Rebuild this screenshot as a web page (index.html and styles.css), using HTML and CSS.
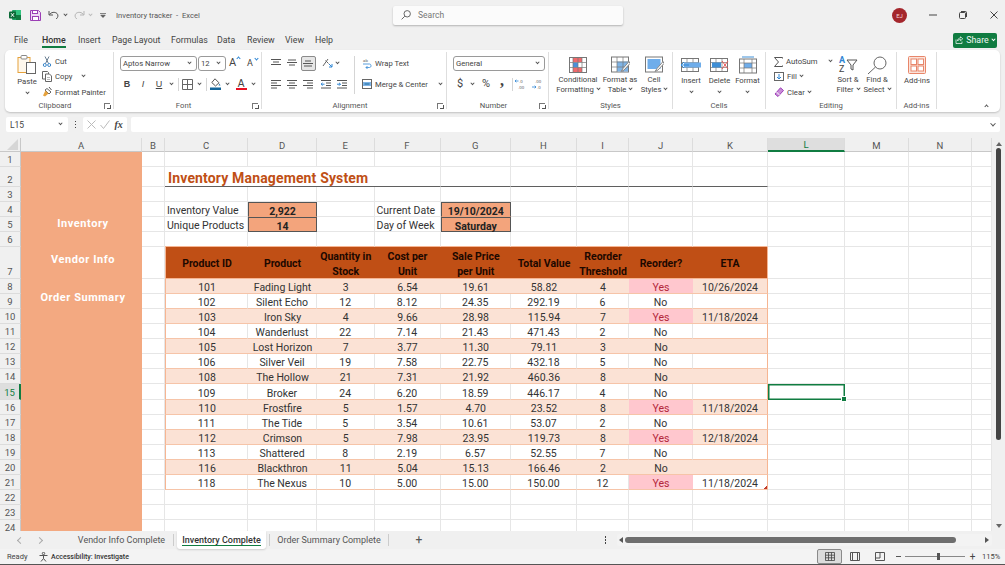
FILE: index.html
```html
<!DOCTYPE html>
<html lang="en">
<head>
<meta charset="utf-8">
<title>Inventory tracker - Excel</title>
<link rel="stylesheet" href="styles.css">
</head>
<body>
<div class="app">

<header class="titlebar">
  <div class="qat">
    <svg class="logo" width="12" height="12" viewBox="0 0 12 12"><rect x="3" y="1" width="9" height="10" rx="1" fill="#21a366"/><rect x="7" y="1" width="5" height="5" fill="#33c481"/><rect x="7" y="6" width="5" height="5" fill="#107c41"/><rect x="0" y="2.500" width="7" height="7" rx="1" fill="#0b6a37"/><path d="M2 4.200 5 7.800M5 4.200 2 7.800" stroke="#fff" stroke-width="1"/></svg>
    <svg class="save" width="11" height="11" viewBox="0 0 11 11"><path d="M.5.5h8l2 2v8H.5z" fill="#eed9f3" stroke="#9b3fb5"/><rect x="2.500" y=".5" width="5" height="3" fill="#fff" stroke="#9b3fb5"/><rect x="2.500" y="6.500" width="6" height="4" fill="#fff" stroke="#9b3fb5"/></svg>
    <svg class="undo" width="11" height="10" viewBox="0 0 11 10"><path d="M1 1v4h4M1.400 4.800C3 2 7 1.600 9 3.500c1.500 1.600 1.200 3.800-.8 5.500" fill="none" stroke="#555"/></svg>
    <i class="chev undo-c"></i>
    <svg class="redo" width="11" height="10" viewBox="0 0 11 10"><path d="M10 1v4H6M9.600 4.800C8 2 4 1.600 2 3.500.5 5.100.8 7.300 2.800 9" fill="none" stroke="#b5b5b5"/></svg>
    <i class="chev redo-c"></i>
    <svg class="custom" width="6" height="5" viewBox="0 0 6 5"><path d="M0 .5h6M.8 2.200l2.200 2.300 2.200-2.300z" fill="#555" stroke="#555" stroke-width=".7"/></svg>
    <span class="doc-title">Inventory tracker&nbsp; -&nbsp; Excel</span>
  </div>
  <div class="search">
    <svg width="10" height="10" viewBox="0 0 10 10"><circle cx="6.200" cy="3.800" r="3.200" fill="none" stroke="#666"/><path d="M3.800 6.200.6 9.400" stroke="#666"/></svg>
    <span>Search</span>
  </div>
  <div class="winctl">
    <span class="avatar">EJ</span>
    <svg class="w-min" width="8" height="8" viewBox="0 0 8 8"><path d="M0 4h8" stroke="#444"/></svg>
    <svg class="w-max" width="8" height="8" viewBox="0 0 8 8"><rect x=".5" y="1.500" width="6" height="6" rx="1" fill="none" stroke="#444"/><path d="M2 .5h4.500a1 1 0 0 1 1 1V6" fill="none" stroke="#444"/></svg>
    <svg class="w-close" width="8" height="8" viewBox="0 0 8 8"><path d="M.5.5l7 7M7.500.5l-7 7" stroke="#444"/></svg>
  </div>
</header>

<nav class="tabs">
  <span class="m-file">File</span>
  <span class="m-home">Home</span>
  <span class="m-insert">Insert</span>
  <span class="m-page">Page Layout</span>
  <span class="m-form">Formulas</span>
  <span class="m-data">Data</span>
  <span class="m-rev">Review</span>
  <span class="m-view">View</span>
  <span class="m-help">Help</span>
  <button class="share">
    <svg width="8" height="8" viewBox="0 0 8 8"><path d="M1 3.500v4h6v-2M2.500 5c0-2 1.500-3 3-3V.8L7.800 2.800 5.500 4.700V3.500C4.200 3.500 3 4 2.500 5z" fill="none" stroke="#fff" stroke-width=".7"/></svg>
    Share <i class="chev chev-w"></i>
  </button>
</nav>

<section class="ribbon">
  <div class="group g-clip">
    <div class="body">
      <div class="big paste">
        <svg width="20" height="19" viewBox="0 0 20 19"><rect x="1" y="2.500" width="12" height="15" fill="#fff8ec" stroke="#e6a23c"/><rect x="4" y=".5" width="6" height="3.500" rx="1" fill="#fff" stroke="#888"/><rect x="9.500" y="7.500" width="9" height="11" fill="#fff" stroke="#666"/></svg>
        <span class="big-t one">Paste</span><i class="chev"></i>
      </div>
      <div class="stack">
        <div class="sm"><svg width="10" height="11" viewBox="0 0 10 11"><path d="M3 .5 6.500 7.500M7 .5 3.500 7.500" stroke="#6a7f92"/><circle cx="2.800" cy="9" r="1.500" fill="none" stroke="#3b86c9"/><circle cx="7.200" cy="9" r="1.500" fill="none" stroke="#3b86c9"/></svg><span>Cut</span></div>
        <div class="sm"><svg width="10" height="11" viewBox="0 0 10 11"><path d="M.5.5h5l1 1V8H.5z" fill="#fff" stroke="#666"/><path d="M3.500 3h4l2 2v5.500h-6z" fill="#fff" stroke="#666"/><path d="M5 6.500h3M5 8.500h3" stroke="#999" stroke-width=".7"/></svg><span>Copy</span><i class="chev c-copy"></i></div>
        <div class="sm"><svg width="10" height="10" viewBox="0 0 10 10"><path d="M5 1.500 9 5 7 7 3 3z" fill="#fff" stroke="#666"/><path d="M3.500 3.500 1 8.500l2 1 3.500-3z" fill="#e6a23c"/><path d="M7 0 9.500 3" stroke="#555"/></svg><span>Format Painter</span></div>
      </div>
    </div>
    <div class="label has-launch">Clipboard<i class="launch"></i></div>
  </div>

  <div class="group g-font">
    <div class="body col">
      <div class="r1">
        <div class="select s-font"><span>Aptos Narrow</span><i class="chev"></i></div>
        <div class="select s-size"><span>12</span><i class="chev"></i></div>
        <span class="grow">A<small></small></span>
        <span class="grow shrink">A<small></small></span>
      </div>
      <div class="tools t-font">
        <b class="serif">B</b><em class="serif">I</em><u>U</u><i class="chev"></i><i class="vsep"></i>
        <svg width="11" height="11" viewBox="0 0 11 11"><path d="M.5.5h10v10H.5zM5.500.5v10M.5 5.500h10" fill="none" stroke="#666"/></svg><i class="chev"></i><i class="vsep"></i>
        <svg width="11" height="12" viewBox="0 0 11 12"><path d="M5 .8 9 4.800 5.500 8 1.800 4.500z" fill="#fff" stroke="#555"/><path d="M9.500 5.500l1 2h-2z" fill="#2a7ab0"/><rect y="9.500" width="11" height="2.500" fill="#14669a"/></svg><i class="chev"></i>
        <span class="fcolor">A</span><i class="chev"></i>
      </div>
    </div>
    <div class="label has-launch">Font<i class="launch"></i></div>
  </div>

  <div class="group g-align">
    <div class="body">
      <div class="a-left">
        <div class="tools t-al1">
          <svg width="10" height="8" viewBox="0 0 10 8"><path d="M0 .5h10M2 3h6M0 5.500h10" stroke="#555"/></svg>
          <svg width="10" height="8" viewBox="0 0 10 8"><path d="M1 1h8M0 3.500h10M2 6h6" stroke="#555"/></svg>
          <span class="on"><svg width="10" height="8" viewBox="0 0 10 8"><path d="M2 2h6M0 4.500h10M1 7h8" stroke="#555"/></svg></span>
          <i></i>
          <svg width="11" height="10" viewBox="0 0 11 10"><path d="M1 8 6 1M3.500 2.500l3 3" stroke="#666"/><path d="M7 6l3 3M10 6v3H7" fill="none" stroke="#2e86d4"/></svg>
          <i class="chev"></i>
        </div>
        <div class="tools t-al2">
          <svg width="10" height="9" viewBox="0 0 10 9"><path d="M0 .5h10M0 3h6M0 5.500h10M0 8h6" stroke="#555"/></svg>
          <svg width="10" height="9" viewBox="0 0 10 9"><path d="M0 .5h10M2 3h6M0 5.500h10M2 8h6" stroke="#555"/></svg>
          <svg width="10" height="9" viewBox="0 0 10 9"><path d="M0 .5h10M4 3h6M0 5.500h10M4 8h6" stroke="#555"/></svg>
          <svg width="10" height="9" viewBox="0 0 10 9"><path d="M0 .5h10M5 3h5M5 5.500h5M0 8h10" stroke="#555"/><path d="M3.500 4.200H0M1.500 2.800 0 4.200l1.500 1.500" fill="none" stroke="#2e86d4"/></svg>
          <svg width="10" height="9" viewBox="0 0 10 9"><path d="M0 .5h10M5 3h5M5 5.500h5M0 8h10" stroke="#555"/><path d="M0 4.200h3.500M2 2.800l1.500 1.400L2 5.700" fill="none" stroke="#2e86d4"/></svg>
        </div>
      </div>
      <i class="vsep tall"></i>
      <div class="a-right">
        <div class="sm"><svg width="10" height="12" viewBox="0 0 10 12"><text x="1" y="4.500" class="ico-t">ab</text><path d="M1 7h6.500c2 0 2 3.500 0 3.500H4M5.500 9 4 10.500 5.500 12" fill="none" stroke="#2e86d4" stroke-width=".8"/></svg><span>Wrap Text</span></div>
        <div class="sm"><svg width="10" height="10" viewBox="0 0 10 10"><rect x=".5" y=".5" width="9" height="9" fill="#fff" stroke="#666"/><rect x="1" y="3" width="8" height="4" fill="#7fb4e6"/><path d="M2.500 5h5" stroke="#14669a"/></svg><span>Merge &amp; Center</span><i class="chev c-merge"></i></div>
      </div>
    </div>
    <div class="label has-launch">Alignment<i class="launch"></i></div>
  </div>

  <div class="group g-num">
    <div class="body col">
      <div class="r1"><div class="select s-gen"><span>General</span><i class="chev"></i></div></div>
      <div class="tools t-num">
        <span class="numt">$</span><i class="chev"></i><span class="numt pct">%</span><b class="numt">,</b><i class="vsep"></i>
        <svg width="11" height="12" viewBox="0 0 11 12"><text x="4" y="4.500" class="ico-t">.0</text><path d="M3.500 3H0M1.300 1.700 0 3l1.300 1.300" fill="none" stroke="#2e86d4" stroke-width=".8"/><text x="3" y="10.500" class="ico-t">.00</text></svg>
        <i></i>
        <svg width="11" height="12" viewBox="0 0 11 12"><text x="3" y="4.500" class="ico-t">.00</text><path d="M0 9h4M2.700 7.700 4 9l-1.300 1.300" fill="none" stroke="#2e86d4" stroke-width=".8"/><text x="5" y="10.500" class="ico-t">.0</text></svg>
      </div>
    </div>
    <div class="label has-launch">Number<i class="launch"></i></div>
  </div>

  <div class="group g-styles">
    <div class="body">
      <div class="big w50">
        <svg class="big-i" width="18" height="16" viewBox="0 0 18 16"><rect x=".5" y=".5" width="17" height="15" fill="#fff" stroke="#777"/><rect x="4" y="1" width="9" height="4" fill="#f0696b"/><rect x="4" y="5.500" width="5" height="5" fill="#4a90d9"/><rect x="4" y="10.500" width="9" height="4.500" fill="#f0696b"/><path d="M4 .5v15M9 .5v15M13 .5v15M.5 5.500h17M.5 10.500h17" stroke="#777" stroke-width=".7"/></svg>
        <span class="big-t">Conditional</span><span class="big-t">Formatting <i class="chev"></i></span>
      </div>
      <div class="big w34">
        <svg class="big-i" width="19" height="17" viewBox="0 0 19 17"><rect x=".5" y=".5" width="17" height="15" fill="#fff" stroke="#777"/><rect x="6" y="5" width="11" height="10" fill="#7fb4e6"/><path d="M6 .5v15M12 .5v15M.5 5.500h17M.5 10.500h17" stroke="#777" stroke-width=".7"/><path d="M18 5 12 12 10 15l3-1.500L19 7z" fill="#fff" stroke="#888"/></svg>
        <span class="big-t">Format as</span><span class="big-t">Table <i class="chev"></i></span>
      </div>
      <div class="big w34">
        <svg class="big-i" width="19" height="17" viewBox="0 0 19 17"><rect x=".5" y=".5" width="17" height="15" fill="#fff" stroke="#777"/><rect x="2.500" y="2.500" width="13" height="10" fill="#6fadea"/><path d="M18 5 12 12 10 15l3-1.500L19 7z" fill="#fff" stroke="#888"/></svg>
        <span class="big-t">Cell</span><span class="big-t">Styles <i class="chev"></i></span>
      </div>
    </div>
    <div class="label">Styles</div>
  </div>

  <div class="group g-cells">
    <div class="body">
      <div class="big w28">
        <svg class="big-i" width="20" height="16" viewBox="0 0 20 16"><rect x=".5" y="1.500" width="17" height="13" fill="#fff" stroke="#777"/><path d="M6 1.500v13M12 1.500v13M.5 5.500h17M.5 10.500h17" stroke="#777" stroke-width=".7"/><rect x="3" y="5.500" width="17" height="5" fill="#6fadea"/><path d="M0 8h8M3 5 0 8l3 3" fill="none" stroke="#2e86d4"/></svg>
        <span class="big-t one">Insert</span><i class="chev"></i>
      </div>
      <div class="big w29">
        <svg class="big-i" width="19" height="16" viewBox="0 0 19 16"><rect x=".5" y="1.500" width="17" height="13" fill="#fff" stroke="#777"/><path d="M6 1.500v13M12 1.500v13M.5 5.500h17M.5 10.500h17" stroke="#777" stroke-width=".7"/><rect x="2" y="5.500" width="9" height="5" fill="#3f8fd6"/><path d="M12 4l6 8M18 4l-6 8" stroke="#e85a5a"/></svg>
        <span class="big-t one">Delete</span><i class="chev"></i>
      </div>
      <div class="big w27">
        <svg class="big-i" width="18" height="17" viewBox="0 0 18 17"><path d="M3 .5h12" stroke="#3f8fd6"/><rect x=".5" y="2.500" width="17" height="14" fill="#fff" stroke="#777"/><rect x="5" y="6.500" width="8" height="5" fill="#6fadea"/><path d="M5 2.500v14M13 2.500v14M.5 6.500h17M.5 11.500h17" stroke="#777" stroke-width=".7"/></svg>
        <span class="big-t one">Format</span><i class="chev"></i>
      </div>
    </div>
    <div class="label">Cells</div>
  </div>

  <div class="group g-edit">
    <div class="body">
      <div class="stack e-stack">
        <div class="sm"><svg width="9" height="10" viewBox="0 0 9 10"><path d="M8.500 1.500V.5H.5L4.500 5 .5 9.500h8v-1" fill="none" stroke="#555"/></svg><span>AutoSum</span><i class="chev c-auto"></i></div>
        <div class="sm"><svg width="10" height="9" viewBox="0 0 10 9"><rect x=".5" y=".5" width="9" height="8" fill="#fff" stroke="#666"/><path d="M5 2v5M3 5l2 2 2-2" fill="none" stroke="#2e86d4"/></svg><span>Fill</span><i class="chev"></i></div>
        <div class="sm"><svg width="10" height="10" viewBox="0 0 10 10"><path d="M6.500.8 9.500 3.500 4 9.500 1 7z" fill="#c98bd8" stroke="#9b3fb5"/><path d="M2.500 5 5.500 8" stroke="#fff"/></svg><span>Clear</span><i class="chev"></i></div>
      </div>
      <div class="big w28">
        <svg class="big-i" width="20" height="20" viewBox="0 0 20 20"><text x="1" y="8" class="sort-a">A</text><text x="1" y="17" class="sort-z">Z</text><path d="M9 5h10l-4 5v5l-2-1v-4z" fill="#fff" stroke="#555"/></svg>
        <span class="big-t">Sort &amp;</span><span class="big-t">Filter <i class="chev"></i></span>
      </div>
      <div class="big w30">
        <svg class="big-i" width="20" height="18" viewBox="0 0 20 18"><circle cx="13" cy="7" r="6" fill="#fff" stroke="#666"/><path d="M8.500 11 1 18" stroke="#666"/></svg>
        <span class="big-t">Find &amp;</span><span class="big-t">Select <i class="chev"></i></span>
      </div>
    </div>
    <div class="label">Editing</div>
  </div>

  <div class="group g-add">
    <div class="body">
      <div class="big w40">
        <svg class="big-i" width="18" height="18" viewBox="0 0 18 18"><rect x=".5" y=".5" width="17" height="17" rx="1" fill="#fbe3da" stroke="#e8866a"/><rect x="3" y="3" width="5.500" height="5.500" fill="#fff" stroke="#e8866a"/><rect x="10" y="3" width="5.500" height="5.500" fill="#fff" stroke="#e8866a"/><rect x="3" y="10" width="5.500" height="5" fill="#fff" stroke="#e8866a"/><rect x="10" y="10" width="5.500" height="5" fill="#fff" stroke="#e8866a"/></svg>
        <span class="big-t one">Add-ins</span>
      </div>
    </div>
    <div class="label">Add-ins</div>
  </div>

  <div class="collapse"><i class="chev chev-up"></i></div>
</section>

<section class="fbar">
  <div class="namebox"><span>L15</span><i class="chev"></i></div>
  <div class="fdots"><i></i><i></i><i></i></div>
  <div class="fbtns">
    <svg width="9" height="9" viewBox="0 0 9 9"><path d="M.5.5l8 8M8.500.5l-8 8" stroke="#bbb"/></svg>
    <svg width="10" height="9" viewBox="0 0 10 9"><path d="M.5 5l3 3.500L9.500.5" fill="none" stroke="#bbb"/></svg>
    <em class="fx">fx</em>
  </div>
  <div class="finput"><i class="chev"></i></div>
</section>

<main class="workarea">
<div class="sheet">
  <div class="ch corner"><svg width="11" height="11" viewBox="0 0 11 11"><path d="M11 0v11H0z" fill="#d6d6d6"/></svg></div>
  <div class="ch">A</div><div class="ch">B</div><div class="ch">C</div><div class="ch">D</div><div class="ch">E</div><div class="ch">F</div><div class="ch">G</div><div class="ch">H</div><div class="ch">I</div><div class="ch">J</div><div class="ch">K</div><div class="ch ch-on">L</div><div class="ch">M</div><div class="ch">N</div><div class="ch"></div>

  <div class="rh">1</div>
  <div class="colA"><span class="nav1">Inventory</span><span class="nav2">Vendor Info</span><span class="nav3">Order Summary</span></div>
  <div></div><div></div><div></div><div></div><div></div><div></div><div></div><div></div><div></div><div></div><div></div><div></div><div></div><div></div>

  <div class="rh">2</div>
  <div></div><div class="title rule nob">Inventory Management System</div><div class="rule nob"></div><div class="rule nob"></div><div class="rule"></div><div class="rule"></div><div class="rule"></div><div class="rule"></div><div class="rule"></div><div class="rule"></div><div></div><div></div><div></div><div></div>

  <div class="rh">3</div>
  <div></div><div></div><div></div><div></div><div></div><div></div><div></div><div></div><div></div><div></div><div></div><div></div><div></div><div></div>

  <div class="rh">4</div>
  <div></div><div class="txt">Inventory Value</div><div class="kpi kpi-t">2,922</div><div></div><div class="txt">Current Date</div><div class="kpi kpi-t">19/10/2024</div><div></div><div></div><div></div><div></div><div></div><div></div><div></div><div></div>

  <div class="rh">5</div>
  <div></div><div class="txt">Unique Products</div><div class="kpi">14</div><div></div><div class="txt">Day of Week</div><div class="kpi">Saturday</div><div></div><div></div><div></div><div></div><div></div><div></div><div></div><div></div>

  <div class="rh">6</div>
  <div></div><div class="ruleP"></div><div class="ruleP"></div><div class="ruleP"></div><div class="ruleP"></div><div class="ruleP"></div><div class="ruleP"></div><div class="ruleP"></div><div class="ruleP"></div><div class="ruleP"></div><div></div><div></div><div></div><div></div>

  <div class="rh">7</div>
  <div></div>
  <div class="th fst">Product ID</div><div class="th">Product</div><div class="th">Quantity in<br>Stock</div><div class="th">Cost per<br>Unit</div><div class="th">Sale Price<br>per Unit</div><div class="th">Total Value</div><div class="th">Reorder<br>Threshold</div><div class="th">Reorder?</div><div class="th lst">ETA</div>
  <div></div><div></div><div></div><div></div>

  <div class="rh">8</div><div></div>
  <div class="b fst">101</div><div class="b">Fading Light</div><div class="b">3</div><div class="b">6.54</div><div class="b">19.61</div><div class="b">58.82</div><div class="b">4</div><div class="yes">Yes</div><div class="b lst">10/26/2024</div>
  <div></div><div></div><div></div><div></div>

  <div class="rh">9</div><div></div>
  <div class="p fst">102</div><div class="p">Silent Echo</div><div class="p">12</div><div class="p">8.12</div><div class="p">24.35</div><div class="p">292.19</div><div class="p">6</div><div class="p">No</div><div class="p lst"></div>
  <div></div><div></div><div></div><div></div>

  <div class="rh">10</div><div></div>
  <div class="b fst">103</div><div class="b">Iron Sky</div><div class="b">4</div><div class="b">9.66</div><div class="b">28.98</div><div class="b">115.94</div><div class="b">7</div><div class="yes">Yes</div><div class="b lst">11/18/2024</div>
  <div></div><div></div><div></div><div></div>

  <div class="rh">11</div><div></div>
  <div class="p fst">104</div><div class="p">Wanderlust</div><div class="p">22</div><div class="p">7.14</div><div class="p">21.43</div><div class="p">471.43</div><div class="p">2</div><div class="p">No</div><div class="p lst"></div>
  <div></div><div></div><div></div><div></div>

  <div class="rh">12</div><div></div>
  <div class="b fst">105</div><div class="b">Lost Horizon</div><div class="b">7</div><div class="b">3.77</div><div class="b">11.30</div><div class="b">79.11</div><div class="b">3</div><div class="b">No</div><div class="b lst"></div>
  <div></div><div></div><div></div><div></div>

  <div class="rh">13</div><div></div>
  <div class="p fst">106</div><div class="p">Silver Veil</div><div class="p">19</div><div class="p">7.58</div><div class="p">22.75</div><div class="p">432.18</div><div class="p">5</div><div class="p">No</div><div class="p lst"></div>
  <div></div><div></div><div></div><div></div>

  <div class="rh">14</div><div></div>
  <div class="b fst">108</div><div class="b">The Hollow</div><div class="b">21</div><div class="b">7.31</div><div class="b">21.92</div><div class="b">460.36</div><div class="b">8</div><div class="b">No</div><div class="b lst"></div>
  <div></div><div></div><div></div><div></div>

  <div class="rh rh-on">15</div><div></div>
  <div class="p fst">109</div><div class="p">Broker</div><div class="p">24</div><div class="p">6.20</div><div class="p">18.59</div><div class="p">446.17</div><div class="p">4</div><div class="p">No</div><div class="p lst"></div>
  <div class="active"></div><div></div><div></div><div></div>

  <div class="rh">16</div><div></div>
  <div class="b fst">110</div><div class="b">Frostfire</div><div class="b">5</div><div class="b">1.57</div><div class="b">4.70</div><div class="b">23.52</div><div class="b">8</div><div class="yes">Yes</div><div class="b lst">11/18/2024</div>
  <div></div><div></div><div></div><div></div>

  <div class="rh">17</div><div></div>
  <div class="p fst">111</div><div class="p">The Tide</div><div class="p">5</div><div class="p">3.54</div><div class="p">10.61</div><div class="p">53.07</div><div class="p">2</div><div class="p">No</div><div class="p lst"></div>
  <div></div><div></div><div></div><div></div>

  <div class="rh">18</div><div></div>
  <div class="b fst">112</div><div class="b">Crimson</div><div class="b">5</div><div class="b">7.98</div><div class="b">23.95</div><div class="b">119.73</div><div class="b">8</div><div class="yes">Yes</div><div class="b lst">12/18/2024</div>
  <div></div><div></div><div></div><div></div>

  <div class="rh">19</div><div></div>
  <div class="p fst">113</div><div class="p">Shattered</div><div class="p">8</div><div class="p">2.19</div><div class="p">6.57</div><div class="p">52.55</div><div class="p">7</div><div class="p">No</div><div class="p lst"></div>
  <div></div><div></div><div></div><div></div>

  <div class="rh">20</div><div></div>
  <div class="b fst">116</div><div class="b">Blackthron</div><div class="b">11</div><div class="b">5.04</div><div class="b">15.13</div><div class="b">166.46</div><div class="b">2</div><div class="b">No</div><div class="b lst"></div>
  <div></div><div></div><div></div><div></div>

  <div class="rh">21</div><div></div>
  <div class="p fst">118</div><div class="p">The Nexus</div><div class="p">10</div><div class="p">5.00</div><div class="p">15.00</div><div class="p">150.00</div><div class="p">12</div><div class="yes">Yes</div><div class="p lst grip">11/18/2024</div>
  <div></div><div></div><div></div><div></div>

  <div class="rh">22</div>
  <div></div><div></div><div></div><div></div><div></div><div></div><div></div><div></div><div></div><div></div><div></div><div></div><div></div><div></div>
  <div class="rh">23</div>
  <div></div><div></div><div></div><div></div><div></div><div></div><div></div><div></div><div></div><div></div><div></div><div></div><div></div><div></div>
  <div class="rh">24</div>
  <div></div><div></div><div></div><div></div><div></div><div></div><div></div><div></div><div></div><div></div><div></div><div></div><div></div><div></div>
</div>
<aside class="vscroll">
  <i class="arrow-up"></i>
  <i class="vthumb"></i>
  <i class="arrow-down"></i>
</aside>
</main>

<section class="tabbar">
  <div class="sheetnav"><i class="chev chev-l"></i><i class="chev chev-r"></i></div>
  <span class="stab t1">Vendor Info Complete</span>
  <span class="stab t2">Inventory Complete</span>
  <span class="stab t3">Order Summary Complete</span>
  <span class="plus">+</span>
  <span class="hdots"><i></i><i></i><i></i></span>
  <div class="hscroll"><i class="arrow-left"></i><i class="hthumb"></i><i class="arrow-right"></i></div>
</section>

<footer class="status">
  <span class="ready">Ready</span>
  <svg class="acc" width="9" height="10" viewBox="0 0 9 10"><circle cx="4.500" cy="1.500" r="1.200" fill="none" stroke="#555"/><path d="M.5 3.500h8M4.500 3.500v3M4.500 6.500 2 9.500M4.500 6.500l2.500 3" fill="none" stroke="#555"/></svg>
  <b class="acc-t">Accessibility: Investigate</b>
  <div class="views">
    <span class="view on"><svg width="10" height="9" viewBox="0 0 10 9"><path d="M.5.5h9v8h-9zM.5 3.200h9M.5 5.800h9M3.500.5v8M6.500.5v8" fill="none" stroke="#444" stroke-width=".8"/></svg></span>
    <span class="view v2"><svg width="10" height="9" viewBox="0 0 10 9"><path d="M.5.5h9v8h-9zM2.500.5v8M7.500.5v8" fill="none" stroke="#555"/></svg></span>
    <span class="view v3"><svg width="10" height="9" viewBox="0 0 10 9"><path d="M.5.5h9v8h-9zM.5 6h4.500V.5" fill="none" stroke="#555"/></svg></span>
  </div>
  <div class="zoom">
    <i class="z-minus"></i>
    <div class="slider"><i class="knob"></i></div>
    <span class="z-plus">+</span>
    <span class="z-pct">115%</span>
  </div>
</footer>

</div>
</body>
</html>
```
FILE: styles.css
```css
*{box-sizing:border-box;margin:0;padding:0}
html,body{width:1005px;height:565px;overflow:hidden;background:#f0f0f0}
body{font-family:Roboto,"Open Sans",sans-serif;font-size:8px;color:#444}
i{font-style:normal}
.app{width:1005px;height:565px;display:flex;flex-direction:column;overflow:hidden;border-bottom:1px solid #555}
.chev{display:inline-block;width:3px;height:3px;border:solid #555;border-width:0 1px 1px 0;transform:rotate(45deg) translate(-1px,-1px)}
.chev-w{border-color:#fff}
.chev-up{transform:rotate(225deg)}
.chev-l{transform:rotate(135deg);width:5px;height:5px;border-color:#aaa}
.chev-r{transform:rotate(-45deg);width:5px;height:5px;border-color:#aaa}

/* title bar */
.titlebar{height:30px;display:flex;align-items:center;flex:none}
.qat{width:393px;display:flex;align-items:center;padding-left:9px}
.save{margin-left:9px}
.undo{margin-left:7px}
.undo-c{margin-left:5px}
.redo{margin-left:7px}
.redo-c{margin-left:4px;border-color:#bbb}
.custom{margin-left:8px}
.doc-title{margin-left:10px;font-size:7.600px;color:#555;white-space:nowrap}
.search{width:230px;height:19px;background:#fbfbfb;border-radius:2px;box-shadow:0 1px 2px rgba(0,0,0,.25);display:flex;align-items:center;padding-left:8px;gap:7px;color:#777;font-size:8.500px}
.winctl{flex:1;display:flex;align-items:center;padding-left:269px}
.avatar{width:15px;height:15px;border-radius:50%;background:#a4262c;color:#f6d5d5;font-size:6px;display:flex;align-items:center;justify-content:center}
.w-min{margin-left:22px}
.w-max{margin-left:22px}
.w-close{margin-left:23px}

/* menu */
.tabs{height:20px;display:flex;align-items:center;flex:none;font-size:8.800px;color:#444;white-space:nowrap;position:relative}
.tabs span{display:block;flex:none}
.m-file{margin-left:14px;width:28px}
.m-home{width:36px;font-weight:500;color:#333;height:20px;line-height:20px}
.m-home::after{content:"";display:block;width:24px;height:2px;background:#107c41;margin-top:-4px}
.m-insert{width:34px}
.m-page{width:59px}
.m-form{width:46px}
.m-data{width:30px}
.m-rev{width:38px}
.m-view{width:30px}
.m-help{width:30px}
.share{margin-left:auto;margin-right:8px;width:44px;height:15px;background:#107c41;border:0;border-radius:2px;color:#f0f8f3;font:8.800px Roboto,sans-serif;display:flex;align-items:center;justify-content:center;gap:3px}

/* ribbon */
.ribbon{height:62px;margin:0 5px;background:#fff;border-radius:5px;box-shadow:0 1px 2px rgba(0,0,0,.2);display:flex;padding-top:2px;flex:none;position:relative}
.group{display:flex;flex-direction:column;flex:none;height:57px;border-right:1px solid #dedede}
.g-clip{width:109px}
.g-font{width:148px}
.g-align{width:185px}
.g-num{width:102px}
.g-styles{width:124px}
.g-cells{width:93px}
.g-edit{width:131px}
.g-add{width:40px}
.body{height:48px;display:flex;flex:none}
.body.col{flex-direction:column}
.label{height:10px;line-height:11px;text-align:center;font-size:7.700px;color:#555;position:relative}
.has-launch{padding-right:8px}
.launch{position:absolute;right:3px;bottom:1px;width:6px;height:6px;border:solid #777;border-width:1px 0 0 1px}
.launch::after{content:"";position:absolute;right:-1px;bottom:0;width:3px;height:3px;border:solid #555;border-width:0 1px 1px 0}

.big{display:flex;flex-direction:column;align-items:center;flex:none;padding-top:3px;white-space:nowrap}
.big-i{height:20px;display:block}
.big svg{flex:none}
.big-t{line-height:10px;height:10px;font-size:7.700px;color:#444;display:block}
.big .one{margin-top:1px}
.big > .chev{margin-top:5px}
.big-t .chev{margin-left:1px;vertical-align:1px}
.w50{width:50px}.w34{width:34px}.w28{width:28px}.w29{width:29px}.w27{width:27px}.w30{width:30px}.w40{width:40px}
.g-styles .body{padding-left:4px}
.g-cells .body{padding-left:4px}
.paste{width:20px;margin-left:12px}
.paste .one{margin-top:3px}
.stack{display:flex;flex-direction:column;margin-left:5px;padding-top:2px}
.sm{display:flex;align-items:center;height:16px;gap:3px;white-space:nowrap;font-size:7.700px;color:#444}
.sm svg{flex:none}
.c-copy{margin-left:7px}
.c-merge{margin-left:8px}
.c-auto{margin-left:8px}
.e-stack{margin-left:8px;width:60px}
.e-stack .sm .chev{flex:none}

.r1{display:flex;align-items:center;height:16px;margin:3px 0 0 6px}
.select{height:15px;border:1px solid #9a9a9a;border-radius:3px;background:#fff;display:flex;align-items:center;justify-content:space-between;padding:0 5px 0 2px;font-size:7.700px;color:#444;white-space:nowrap}
.s-font{width:77px}
.s-size{width:28px;margin-left:1px}
.s-gen{width:92px}
.grow{width:12px;margin-left:3px;font-size:11px;color:#444;line-height:14px;position:relative}
.grow small{position:absolute;left:8px;top:1px;width:3px;height:3px;border:solid #2e86d4;border-width:1px 0 0 1px;transform:rotate(45deg)}
.shrink{font-size:9px;margin-left:6px}
.shrink small{transform:rotate(225deg)}
.tools{display:grid;align-items:center;justify-items:center;height:14px}
.vsep{display:block;width:1px;height:13px;background:#d5d5d5}
.vsep.tall{height:38px;margin:4px 0 0 6px}
.t-font{margin:6px 0 0 6px;grid-template-columns:14px 18px 14px 10px 4px 14px 10px 4px 14px 10px 18px 6px;font-size:10px;color:#444}
.t-font u{font-family:"Liberation Sans",sans-serif;font-size:9px}
.t-font b,.t-font em{font-family:"Liberation Sans",sans-serif;font-size:9px}
.fcolor{font-family:"Liberation Sans",sans-serif;font-size:10px;line-height:9px;border-bottom:2px solid #e81123;width:11px;text-align:center;color:#444}

.a-left{display:flex;flex-direction:column;padding:3px 0 0 5px;gap:5px}
.t-al1{grid-template-columns:17px 16px 16px 4px 14px 6px;height:16px}
.t-al2{grid-template-columns:17px 16px 16px 20px 12px;height:16px}
.on{width:15px;height:15px;background:#e6e6e6;border:1px solid #8a8a8a;border-radius:2px;display:flex;align-items:center;justify-content:center}
.a-right{display:flex;flex-direction:column;margin-left:7px;padding-top:3px;gap:5px}
.ico-t{font:4.400px Roboto,sans-serif;fill:#666}

.t-num{margin:6px 0 0 6px;grid-template-columns:14px 10px 18px 14px 6px 10px 5px 14px;font-size:11px;color:#444}
.numt{font-size:11px;line-height:14px}
.pct{font-size:11px}
b.numt{font-family:"Liberation Serif",serif;font-size:16px;line-height:8px;height:14px}
.sort-a{font:bold 9px Roboto,sans-serif;fill:#2e86d4}
.sort-z{font:9px Roboto,sans-serif;fill:#444}

.collapse{position:absolute;right:9px;bottom:6px;width:6px;height:5px}

/* formula bar */
.fbar{height:15px;margin:5px 5px 0 6px;display:flex;flex:none;align-items:stretch;font-size:8.500px}
.namebox{width:62px;background:#fff;border-radius:2px;display:flex;align-items:center;justify-content:space-between;padding:0 6px 0 4px;color:#444}
.fdots{width:15px;display:flex;flex-direction:column;align-items:center;justify-content:center;gap:1.500px}
.fdots i,.hdots i{display:block;width:1.500px;height:1.500px;background:#444}
.fbtns{width:44px;background:#fff;border-radius:2px;display:flex;align-items:center;justify-content:space-evenly}
.fx{font:italic bold 10px "Liberation Serif",serif;color:#444}
.finput{flex:1;margin-left:4px;background:#fff;border-radius:2px;display:flex;align-items:center;justify-content:flex-end;padding-right:5px}
.finput .chev{width:4px;height:4px}

/* sheet */
.workarea{height:393px;margin-top:6px;display:flex;flex:none}
.sheet{width:992px;height:393px;overflow:hidden;display:grid;align-content:start;
  grid-template-columns:21px 121px 23px 83px 69px 57.500px 66px 70.500px 66px 52px 64px 75px 77px 64px 63px 20px;
  grid-template-rows:14px 15px 20px repeat(4,15.080px) 31.600px repeat(17,15.080px);
  font-family:Roboto,"Liberation Sans",sans-serif;font-size:10.500px;color:#333;background:#fff}
.sheet > *{border-right:1px solid #e6e6e6;border-bottom:1px solid #e6e6e6;display:flex;align-items:center;justify-content:center;text-align:center;white-space:nowrap;min-width:0}
.ch{background:#f0f0f0;border-right:1px solid #dcdcdc;border-bottom:1px solid #c8c8c8;font:9.500px Roboto,sans-serif;color:#555;padding-top:1px}
.corner{justify-content:flex-end;padding:0 2px 0 0;border-right:1px solid #c8c8c8}
.ch-on{background:#dedede;color:#107c41;border-bottom:2px solid #107c41}
.rh{background:#f0f0f0;border-right:1px solid #c8c8c8;border-bottom:1px solid #dcdcdc;font:9.500px/12px Roboto,sans-serif;color:#555;align-items:flex-end}
.rh-on{background:#dedede;color:#107c41;border-right:2px solid #107c41}
.colA{grid-column:2;grid-row:2 / -1;background:#f3a981;border:0;flex-direction:column;justify-content:flex-start;align-items:center;padding:65px 0 0 3px;color:#fff;font-size:11px;font-weight:700;letter-spacing:.55px;line-height:14px}
.nav1{display:block;height:14px}
.nav2{display:block;height:14px;margin-top:22px}
.nav3{display:block;height:14px;margin-top:24px}
.sheet > .title{justify-content:flex-start;overflow:visible;padding:2px 0 0 3px;font-size:14px;font-weight:700;color:#c04f15;letter-spacing:.15px}
.sheet > .rule{border-bottom:1px solid #5f5f5f}
.sheet > .nob{border-right:0}
.sheet > .ruleP{border-bottom-color:#f6b592}
.sheet > .txt{justify-content:flex-start;padding:3px 0 0 2px}
.sheet > .kpi{background:#f3a47c;border:1px solid #555;font-weight:700;color:#222;padding-top:3px}
.sheet > .kpi-t{border-bottom-color:#f3a47c}
.sheet > .th{background:#c04f15;border-right:0;border-bottom:1px solid #f6b592;font-weight:700;color:#1c0800;line-height:15px;padding-top:2px}
.sheet > .b{background:#fbe2d5;border-right:0;border-bottom:1px solid #f6c4a8;padding-top:3px}
.sheet > .p{background:#fff;border-bottom:1px solid #f6c4a8;padding-top:3px}
.sheet > .yes{background:#ffc7ce;color:#b3263a;border-right:0;border-bottom:1px solid #f6c4a8;padding-top:3px}
.sheet > .fst{border-left:1px solid #f6b592}
.sheet > .lst{border-right:1px solid #f6b592}
.sheet > .grip{position:relative}
.grip::after{content:"";position:absolute;right:0;bottom:0;width:3px;height:3px;background:linear-gradient(135deg,transparent 50%,#c0392b 50%)}
.sheet > .active{position:relative;border:0;box-shadow:inset 0 0 0 1.500px #107c41}
.active::after{content:"";position:absolute;right:-2px;bottom:-2px;width:4px;height:4px;background:#107c41;border:1px solid #fff}

.vscroll{width:13px;display:flex;flex-direction:column;align-items:center;padding:4px 0 2px}
.arrow-up{width:0;height:0;border:3px solid transparent;border-top:0;border-bottom:4px solid #666}
.arrow-down{width:0;height:0;border:3px solid transparent;border-bottom:0;border-top:4px solid #666;margin-top:auto;margin-bottom:1px}
.vthumb{display:block;width:5px;height:292px;margin-top:2px;background:#444;border-radius:3px}

/* sheet tabs */
.tabbar{height:18px;flex:none;display:flex;align-items:center;font-size:9px;color:#555;white-space:nowrap;padding-right:13px}
.sheetnav{width:70px;display:flex;gap:14px;padding-left:18px;align-items:center}
.stab{display:flex;align-items:center;justify-content:center;height:12px;flex:none}
.t1{width:104px;border-right:1px solid #ccc}
.t2{width:89px;height:18px;margin:0 3px;background:#fff;border-radius:0 0 3px 3px;font-weight:500;color:#333;box-shadow:0 1px 2px rgba(0,0,0,.15);position:relative}
.t2::after{content:"";position:absolute;left:5px;right:5px;bottom:3px;height:1.500px;background:#107c41}
.t3{width:120px;border-left:1px solid #ccc;border-right:1px solid #ccc}
.plus{margin-left:25px;font-size:12px;color:#555;width:10px;text-align:center}
.hdots{margin-left:auto;display:flex;flex-direction:column;gap:1.500px;margin-right:11px}
.hscroll{width:375px;height:12px;display:flex;align-items:center;padding:0 1px 0 2px;background:#f3f3f3;border-radius:2px}
.arrow-left{width:0;height:0;border:3px solid transparent;border-left:0;border-right:4px solid #555}
.arrow-right{width:0;height:0;border:3px solid transparent;border-right:0;border-left:4px solid #555;margin-left:auto;margin-right:2px}
.hthumb{display:block;width:331px;height:6px;margin-left:2px;background:#6e6e6e;border-radius:3px}

/* status */
.status{height:15px;flex:none;display:flex;align-items:center;font-size:7.500px;color:#444;padding-left:7px;white-space:nowrap;background:#f3f3f3}
.ready{width:32px}
.acc-t{margin-left:3px;font-size:7px;font-weight:500;color:#333}
.views{margin-left:auto;display:flex;align-items:center;height:15px}
.view{width:25px;height:15px;display:flex;align-items:center;justify-content:center}
.view.on{background:#dcdcdc}
.zoom{display:flex;align-items:center;margin-left:4px;padding-right:6px}
.z-minus{display:block;width:5px;height:1px;background:#555}
.slider{position:relative;width:60px;height:1px;background:#888;margin:0 4px}
.knob{position:absolute;left:32px;top:-3px;width:3px;height:7px;background:#555}
.z-plus{font-size:10px;width:7px;text-align:center;line-height:10px}
.z-pct{margin-left:6px;width:17px}
```
